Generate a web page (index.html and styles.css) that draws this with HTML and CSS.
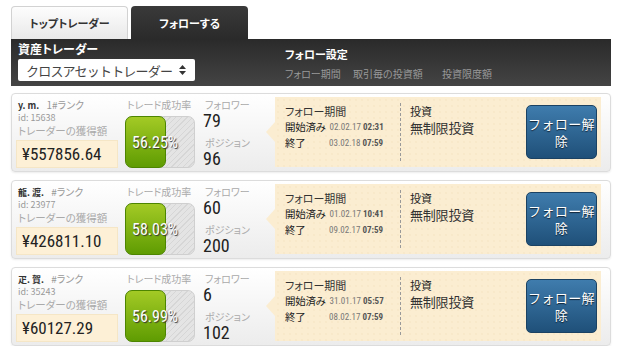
FILE: index.html
```html
<!DOCTYPE html>
<html lang="ja">

<head>
    <meta charset="utf-8">
    <link rel="stylesheet" href="styles.css">
</head>

<body>
    <div class="tabs">
        <div class="tab tab-light">トップトレーダー</div>
        <div class="tab tab-dark">フォローする</div>
    </div>

    <div class="toolbar">
        <div class="filter">
            <div class="filter-title">資産トレーダー</div>
            <div class="select">
                <span>クロスアセットトレーダー</span>
                <svg width="7" height="10" viewBox="0 0 7 10"><path d="M3.5 0L7 4H0z M3.5 10L7 6H0z" fill="#333"/></svg>
            </div>
        </div>
        <div class="settings">
            <div class="settings-title">フォロー設定</div>
            <div class="settings-cols">
                <span class="col-period">フォロー期間</span>
                <span class="col-amount">取引毎の投資額</span>
                <span>投資限度額</span>
            </div>
        </div>
    </div>

    <div class="list">
        <div class="card">
            <div class="trader">
                <div class="name"><b>y. m.</b> <span>1#ランク</span></div>
                <div class="trader-id">id: 15638</div>
                <div class="label">トレーダーの獲得額</div>
                <div class="amount">¥557856.64</div>
            </div>
            <div class="rate">
                <div class="label-sm">トレード成功率</div>
                <div class="bar">
                    <div class="bar-fill" style="width: 58%"></div>
                    <div class="bar-text">56.25%</div>
                </div>
            </div>
            <div class="stats">
                <div class="label-sm">フォロワー</div>
                <div class="num">79</div>
                <div class="label-sm pos-label">ポジション</div>
                <div class="num">96</div>
            </div>
            <div class="follow">
                <div class="period">
                    <div class="period-title">フォロー期間</div>
                    <div class="date-row"><span class="date-key">開始済み</span><span class="date">02.02.17 <b>02:31</b></span></div>
                    <div class="date-row"><span class="date-key">終了</span><span class="date">03.02.18 <b>07:59</b></span></div>
                </div>
                <div class="invest">
                    <div class="invest-title">投資</div>
                    <div class="invest-value">無制限投資</div>
                </div>
                <button class="unfollow-button">フォロー解除</button>
            </div>
        </div>

        <div class="card">
            <div class="trader">
                <div class="name"><b>龍. 渡.</b> <span>#ランク</span></div>
                <div class="trader-id">id: 23977</div>
                <div class="label">トレーダーの獲得額</div>
                <div class="amount">¥426811.10</div>
            </div>
            <div class="rate">
                <div class="label-sm">トレード成功率</div>
                <div class="bar">
                    <div class="bar-fill" style="width: 58%"></div>
                    <div class="bar-text">58.03%</div>
                </div>
            </div>
            <div class="stats">
                <div class="label-sm">フォロワー</div>
                <div class="num">60</div>
                <div class="label-sm pos-label">ポジション</div>
                <div class="num">200</div>
            </div>
            <div class="follow">
                <div class="period">
                    <div class="period-title">フォロー期間</div>
                    <div class="date-row"><span class="date-key">開始済み</span><span class="date">01.02.17 <b>10:41</b></span></div>
                    <div class="date-row"><span class="date-key">終了</span><span class="date">09.02.17 <b>07:59</b></span></div>
                </div>
                <div class="invest">
                    <div class="invest-title">投資</div>
                    <div class="invest-value">無制限投資</div>
                </div>
                <button class="unfollow-button">フォロー解除</button>
            </div>
        </div>

        <div class="card">
            <div class="trader">
                <div class="name"><b>疋. 賀.</b> <span>#ランク</span></div>
                <div class="trader-id">id: 35243</div>
                <div class="label">トレーダーの獲得額</div>
                <div class="amount">¥60127.29</div>
            </div>
            <div class="rate">
                <div class="label-sm">トレード成功率</div>
                <div class="bar">
                    <div class="bar-fill" style="width: 58%"></div>
                    <div class="bar-text">56.99%</div>
                </div>
            </div>
            <div class="stats">
                <div class="label-sm">フォロワー</div>
                <div class="num">6</div>
                <div class="label-sm pos-label">ポジション</div>
                <div class="num">102</div>
            </div>
            <div class="follow">
                <div class="period">
                    <div class="period-title">フォロー期間</div>
                    <div class="date-row"><span class="date-key">開始済み</span><span class="date">31.01.17 <b>05:57</b></span></div>
                    <div class="date-row"><span class="date-key">終了</span><span class="date">08.02.17 <b>07:59</b></span></div>
                </div>
                <div class="invest">
                    <div class="invest-title">投資</div>
                    <div class="invest-value">無制限投資</div>
                </div>
                <button class="unfollow-button">フォロー解除</button>
            </div>
        </div>
    </div>
</body>

</html>
```

FILE: styles.css
```css
body {
    font-family: "Noto Sans CJK JP", sans-serif;
    font-feature-settings: "palt";
    background-color: #fff;
    color: #222;
    margin: 0;
    padding: 6px 9px 0 11px;
    white-space: nowrap;
}

.tabs {
    display: flex;
    gap: 3px;
    height: 33px;
}

.tab {
    width: 117px;
    display: flex;
    align-items: center;
    justify-content: center;
    font-size: 11px;
    font-weight: bold;
    border-radius: 4px 4px 0 0;
    box-sizing: border-box;
}

.tab-light {
    background: linear-gradient(#fdfdfd, #e9e9e9);
    border: 1px solid #d2d2d2;
    border-bottom: none;
    color: #333;
}

.tab-dark {
    background: linear-gradient(#3a3a3a, #2a2a2a);
    color: #fff;
}

.toolbar {
    height: 47px;
    background: linear-gradient(#2a2a2a, #444);
    display: flex;
    padding: 0 7px;
}

.filter-title {
    color: #fff;
    font-size: 12px;
    font-weight: bold;
    line-height: 14px;
    margin-top: 3px;
}

.select {
    width: 177px;
    height: 22px;
    margin-top: 3px;
    background-color: #fff;
    border-radius: 2px;
    box-sizing: border-box;
    display: flex;
    align-items: center;
    justify-content: space-between;
    padding: 0 9px 0 8px;
    font-size: 13px;
    font-feature-settings: normal;
    letter-spacing: -0.8px;
    color: #444;
}

.settings {
    margin-left: 90px;
}

.settings-title {
    color: #fff;
    font-size: 11px;
    font-weight: bold;
    margin-top: 8px;
    line-height: 14px;
}

.settings-cols {
    color: #999;
    font-size: 10px;
    margin-top: 5px;
    display: flex;
}

.col-period {
    width: 68px;
}

.col-amount {
    width: 89px;
}

.list {
    margin-top: 7px;
    display: flex;
    flex-direction: column;
    gap: 8px;
}

.card {
    height: 79px;
    box-sizing: border-box;
    border: 1px solid #dcdcdc;
    border-radius: 4px;
    background: linear-gradient(#fff, #ececec);
    box-shadow: 0 1px 2px rgba(0, 0, 0, 0.08);
    display: flex;
    align-items: flex-start;
    padding: 4px 9px 0 4px;
}

.trader {
    width: 102px;
    flex-shrink: 0;
}

.name {
    font-size: 10px;
    line-height: 13px;
    padding-left: 2px;
    color: #444;
}

.name b {
    font-size: 9px;
    color: #333;
    margin-right: 5px;
}

.name span {
    color: #999;
}

.trader-id {
    font-size: 9px;
    color: #999;
    line-height: 12px;
    padding-left: 2px;
}

.label {
    font-size: 10.5px;
    color: #aaa;
    line-height: 13px;
    padding-left: 2px;
}

.amount {
    margin-top: 3px;
    height: 28px;
    background-color: #fdf0d6;
    border: 1px solid #f5e6c6;
    box-sizing: border-box;
    display: flex;
    align-items: center;
    padding-left: 5px;
    font-family: "Roboto Condensed", "Liberation Sans Narrow", "DejaVu Sans Condensed", Roboto, sans-serif;
    font-size: 17px;
    color: #222;
}

.rate {
    width: 70px;
    margin-left: 7px;
    flex-shrink: 0;
}

.label-sm {
    font-size: 10px;
    color: #aaa;
    line-height: 13px;
    padding-left: 2px;
}

.bar {
    position: relative;
    height: 52px;
    margin-top: 5px;
    border-radius: 7px;
    border: 1px solid #cfcfcf;
    box-sizing: border-box;
    background: repeating-linear-gradient(135deg, #e4e4e4 0, #e4e4e4 3px, #d6d6d6 3px, #d6d6d6 4px);
}

.bar-fill {
    height: 100%;
    margin: -1px 0 0 -1px;
    border-radius: 7px;
    border: 1px solid #4d8500;
    background: linear-gradient(#a3ca25, #5f9c02);
}

.bar-text {
    position: absolute;
    top: 0;
    left: 0;
    right: 10px;
    bottom: 0;
    display: flex;
    align-items: center;
    justify-content: center;
    color: #fff;
    font-family: "Roboto Condensed", "Liberation Sans Narrow", "DejaVu Sans Condensed", Roboto, sans-serif;
    font-size: 16px;
    text-shadow: 1px 1px 1px #333;
}

.stats {
    margin-left: 8px;
    width: 60px;
    flex-shrink: 0;
}

.num {
    font-family: "Roboto Condensed", "Liberation Sans Narrow", "DejaVu Sans Condensed", Roboto, sans-serif;
    font-size: 18px;
    line-height: 20px;
    color: #222;
}

.pos-label {
    margin-top: 5px;
}

.follow {
    position: relative;
    margin-left: 12px;
    margin-top: -1px;
    flex: 1;
    height: 70px;
    display: flex;
    align-items: flex-start;
    background-color: #fbedd1;
    background-image: radial-gradient(#f6e4c4 0.5px, transparent 1px);
    background-size: 6px 6px;
    padding-right: 4px;
    box-sizing: border-box;
}

.follow::before {
    content: "";
    position: absolute;
    left: -9px;
    top: 25px;
    border-top: 10px solid transparent;
    border-bottom: 10px solid transparent;
    border-right: 9px solid #fbedd1;
}

.period {
    width: 125px;
    box-sizing: border-box;
    padding: 6px 0 0 10px;
    font-size: 11px;
    line-height: 16px;
}

.period-title {
    color: #333;
}

.date-row {
    display: flex;
    align-items: center;
}

.date-key {
    min-width: 40px;
    margin-right: 4px;
    font-size: 10.5px;
    letter-spacing: -0.3px;
}

.date {
    font-family: "Roboto Condensed", "Liberation Sans Narrow", "DejaVu Sans Condensed", Roboto, sans-serif;
    font-size: 9px;
    color: #777;
}

.date b {
    color: #555;
}

.invest {
    flex: 1;
    margin-top: 6px;
    height: 58px;
    box-sizing: border-box;
    border-left: 1px dashed #999;
    padding: 0 0 0 9px;
}

.invest-title {
    font-size: 11px;
    line-height: 16px;
}

.invest-value {
    font-size: 13px;
    line-height: 19px;
    margin-top: -1px;
    letter-spacing: -0.2px;
    color: #333;
}

.unfollow-button {
    align-self: center;
    width: 71px;
    height: 54px;
    padding: 0;
    border: 1px solid #1b4263;
    border-radius: 5px;
    background: linear-gradient(#3f7cad, #1f5079);
    color: #fff;
    font-family: "Noto Sans CJK JP", sans-serif;
    font-feature-settings: normal;
    font-size: 13px;
    letter-spacing: 0.4px;
    line-height: 17px;
    white-space: normal;
    text-shadow: 0 1px 1px #123;
    cursor: pointer;
}
```
